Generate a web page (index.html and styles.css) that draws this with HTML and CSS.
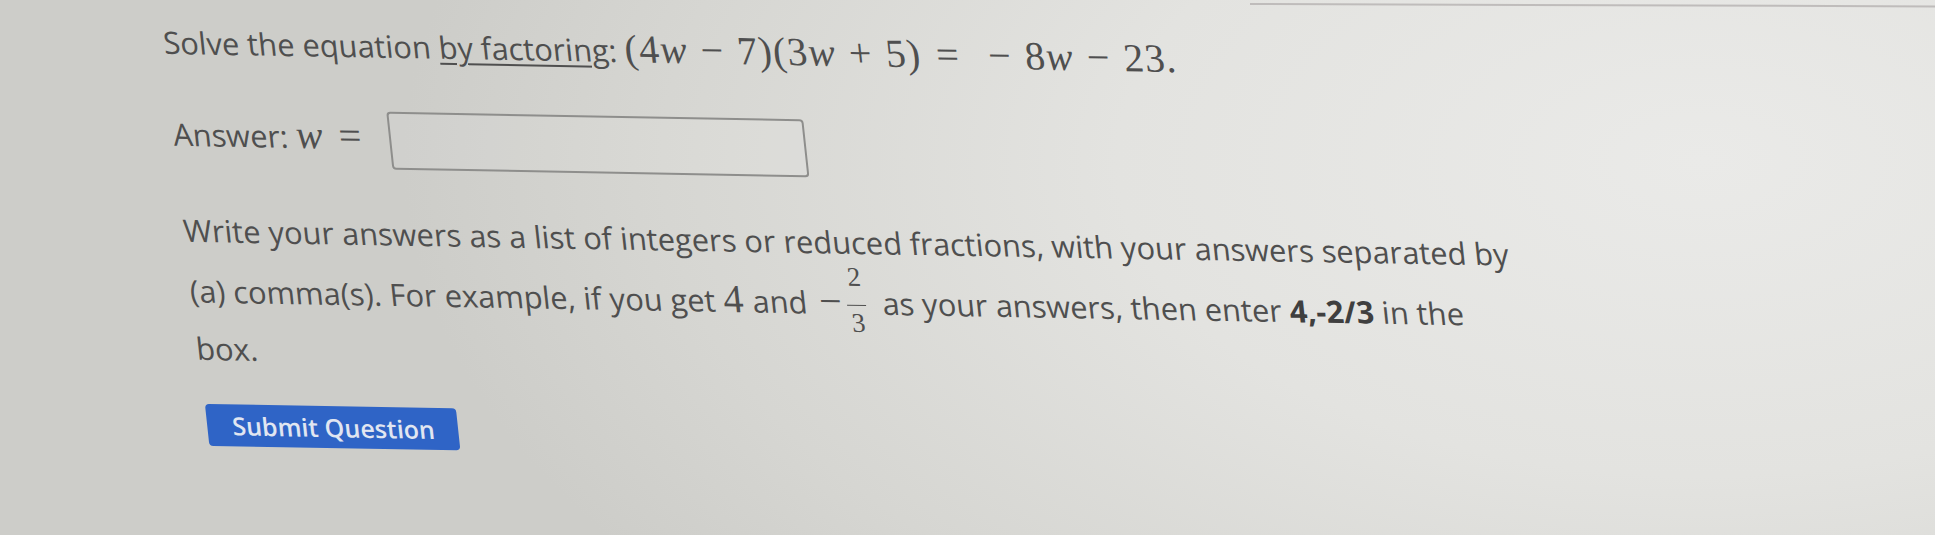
FILE: index.html
```html
<!DOCTYPE html>
<html lang="en">
<head>
<meta charset="utf-8">
<title>Solve the equation</title>
<link rel="stylesheet" href="styles.css">
</head>
<body>
<div class="page">
  <div class="edge"></div>
  <div class="sheet">
    <p class="question">Solve the equation <a class="link" href="#">by factoring</a>: <span class="math">(4<i>w</i><span class="op">−</span>7)(3<i>w</i><span class="op">+</span>5)<span class="rel">=</span><span class="op">−</span>8<i>w</i><span class="op">−</span>23.</span></p>
    <div class="answer-row">
      <span class="label">Answer: <span class="math"><i>w</i><span class="rel">=</span></span></span>
      <span class="input"></span>
    </div>
    <p class="help">Write your answers as a list of integers or reduced fractions, with your answers separated by (a) comma(s). For example, if you get <span class="math">4</span> and <span class="math neg">−</span><span class="frac"><span class="num">2</span><span class="den">3</span></span> as your answers, then enter <b>4,-2/3</b> in the box.</p>
    <button class="submit" type="button">Submit Question</button>
  </div>
</div>
</body>
</html>
```
FILE: styles.css
```css
html, body {
  margin: 0;
  padding: 0;
}
body {
  width: 1935px;
  height: 535px;
  overflow: hidden;
}
.page {
  position: relative;
  width: 1935px;
  height: 535px;
  overflow: hidden;
  background:
    radial-gradient(ellipse 1300px 700px at 88% 30%, #eaeae8 0%, #e3e3e0 45%, #d6d6d2 80%, #cdcdc9 100%);
}
.edge {
  position: absolute;
  left: 1250px;
  top: 3px;
  width: 700px;
  height: 2px;
  background: #bfbcbb;
  transform: rotate(0.2deg);
  transform-origin: 0 0;
}
.sheet {
  transform-origin: 0 0;
  transform: matrix(1, 0.018, 0.107, 1, 0, 0);
  padding: 13px 0 0 159px;
  font-family: "Open Sans", "Liberation Sans", sans-serif;
  font-size: 30.8px;
  line-height: 52px;
  color: #4f4f4f;
}
.question {
  margin: 0;
  white-space: nowrap;
}
.link {
  color: inherit;
  text-decoration: underline;
  text-decoration-thickness: 2px;
  text-underline-offset: 4px;
}
.math {
  font-family: "Liberation Serif", "DejaVu Serif", serif;
  font-size: 40px;
  line-height: 1;
  letter-spacing: 1px;
}
.math i {
  font-style: italic;
}
.op {
  margin: 0 0.33em;
}
.rel {
  margin: 0 0.38em;
}
.answer-row {
  display: flex;
  align-items: flex-start;
  gap: 27px;
  margin-top: 40px;
}
.label {
  white-space: nowrap;
  margin-top: 0;
}
.label .rel {
  margin-right: 0;
}
.input {
  display: block;
  box-sizing: border-box;
  width: 417px;
  height: 58px;
  border: 2px solid #8e8e8c;
  border-radius: 4px;
  background: rgba(255, 255, 255, 0.08);
}
.help {
  margin: 38px 0 0;
  width: 1335px;
}
.help b {
  font-weight: 700;
  color: #3f3f3f;
}
.neg {
  margin: 0 2px 0 4px;
}
.frac {
  display: inline-flex;
  flex-direction: column;
  align-items: center;
  vertical-align: 28.5px;
  font-family: "Liberation Serif", "DejaVu Serif", serif;
  font-size: 27px;
  line-height: 19px;
  margin: 0 8px 1px 2px;
}
.num {
  display: block;
  padding: 0 3px;
  margin-bottom: 18px;
}
.den {
  display: block;
  padding: 8px 3px 0;
  border-top: 1.5px solid #4f4f4f;
}
.submit {
  display: block;
  box-sizing: border-box;
  height: 42px;
  width: 251px;
  margin: 30px 0 0 3px;
  padding: 0 25px;
  border: none;
  border-radius: 4px;
  background: #2f64c6;
  color: #e1e6f1;
  font-family: "Open Sans", "Liberation Sans", sans-serif;
  font-weight: 600;
  font-size: 25px;
  line-height: 42px;
  text-align: left;
  white-space: nowrap;
}
```
